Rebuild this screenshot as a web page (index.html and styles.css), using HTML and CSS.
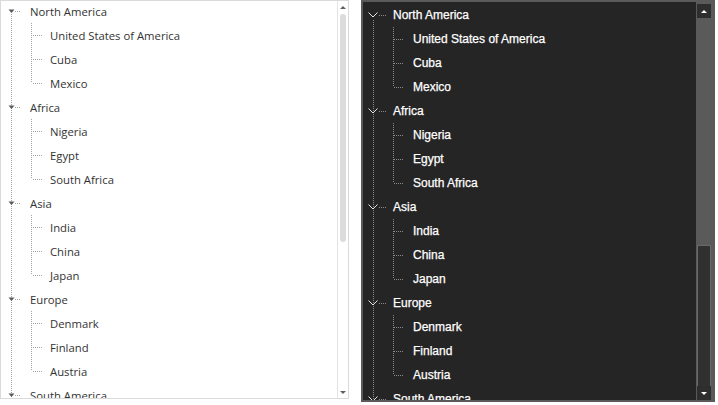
FILE: index.html
```html
<html>
  <head>
    <title>Tree views</title>
    <link rel="stylesheet" href="styles.css">
  </head>
  <body>
    <div class="panel light">
      <div class="tree">
        <div class="node first"><svg class="toggle" width="8" height="5" viewBox="0 0 8 5"><polygon points="0.5,0.5 6.5,0.5 3.5,4"/></svg><span class="label">North America</span></div>
        <div class="children">
          <div class="leaf"><span class="label">United States of America</span></div>
          <div class="leaf"><span class="label">Cuba</span></div>
          <div class="leaf"><span class="label">Mexico</span></div>
        </div>
        <div class="node"><svg class="toggle" width="8" height="5" viewBox="0 0 8 5"><polygon points="0.5,0.5 6.5,0.5 3.5,4"/></svg><span class="label">Africa</span></div>
        <div class="children">
          <div class="leaf"><span class="label">Nigeria</span></div>
          <div class="leaf"><span class="label">Egypt</span></div>
          <div class="leaf"><span class="label">South Africa</span></div>
        </div>
        <div class="node"><svg class="toggle" width="8" height="5" viewBox="0 0 8 5"><polygon points="0.5,0.5 6.5,0.5 3.5,4"/></svg><span class="label">Asia</span></div>
        <div class="children">
          <div class="leaf"><span class="label">India</span></div>
          <div class="leaf"><span class="label">China</span></div>
          <div class="leaf"><span class="label">Japan</span></div>
        </div>
        <div class="node"><svg class="toggle" width="8" height="5" viewBox="0 0 8 5"><polygon points="0.5,0.5 6.5,0.5 3.5,4"/></svg><span class="label">Europe</span></div>
        <div class="children">
          <div class="leaf"><span class="label">Denmark</span></div>
          <div class="leaf"><span class="label">Finland</span></div>
          <div class="leaf"><span class="label">Austria</span></div>
        </div>
        <div class="node"><svg class="toggle" width="8" height="5" viewBox="0 0 8 5"><polygon points="0.5,0.5 6.5,0.5 3.5,4"/></svg><span class="label">South America</span></div>
      </div>
      <div class="scrollbar">
        <svg class="arrow" width="6" height="3" viewBox="0 0 6 3"><polygon points="3,0 6,3 0,3"/></svg>
        <div class="thumb"></div>
        <div class="track"></div>
        <svg class="arrow" width="6" height="3" viewBox="0 0 6 3"><polygon points="0,0 6,0 3,3"/></svg>
      </div>
    </div>

    <div class="panel dark">
      <div class="tree">
        <div class="node first"><svg class="toggle" width="10" height="6" viewBox="0 0 10 6"><polyline points="0.5,0.5 5,5 9.5,0.5"/></svg><span class="label">North America</span></div>
        <div class="children">
          <div class="leaf"><span class="label">United States of America</span></div>
          <div class="leaf"><span class="label">Cuba</span></div>
          <div class="leaf"><span class="label">Mexico</span></div>
        </div>
        <div class="node"><svg class="toggle" width="10" height="6" viewBox="0 0 10 6"><polyline points="0.5,0.5 5,5 9.5,0.5"/></svg><span class="label">Africa</span></div>
        <div class="children">
          <div class="leaf"><span class="label">Nigeria</span></div>
          <div class="leaf"><span class="label">Egypt</span></div>
          <div class="leaf"><span class="label">South Africa</span></div>
        </div>
        <div class="node"><svg class="toggle" width="10" height="6" viewBox="0 0 10 6"><polyline points="0.5,0.5 5,5 9.5,0.5"/></svg><span class="label">Asia</span></div>
        <div class="children">
          <div class="leaf"><span class="label">India</span></div>
          <div class="leaf"><span class="label">China</span></div>
          <div class="leaf"><span class="label">Japan</span></div>
        </div>
        <div class="node"><svg class="toggle" width="10" height="6" viewBox="0 0 10 6"><polyline points="0.5,0.5 5,5 9.5,0.5"/></svg><span class="label">Europe</span></div>
        <div class="children">
          <div class="leaf"><span class="label">Denmark</span></div>
          <div class="leaf"><span class="label">Finland</span></div>
          <div class="leaf"><span class="label">Austria</span></div>
        </div>
        <div class="node"><svg class="toggle" width="10" height="6" viewBox="0 0 10 6"><polyline points="0.5,0.5 5,5 9.5,0.5"/></svg><span class="label">South America</span></div>
      </div>
      <div class="scrollbar">
        <div class="button"><svg width="6" height="3" viewBox="0 0 6 3"><polygon points="3,0 6,3 0,3"/></svg></div>
        <div class="thumb"></div>
        <div class="track"></div>
        <div class="button"><svg width="6" height="3" viewBox="0 0 6 3"><polygon points="0,0 6,0 3,3"/></svg></div>
      </div>
    </div>
  </body>
</html>
```

FILE: styles.css
```css
/* Page */
body {
  margin: 0;
  display: flex;
  gap: 12px;
  background-color: white;
}

.panel {
  display: flex;
  box-sizing: border-box;
  overflow: hidden;
}

.tree {
  flex: 1;
  overflow: hidden;
}

.node, .leaf {
  display: flex;
  align-items: center;
  height: 24px;
  white-space: nowrap;
}

.leaf {
  padding-left: 49px;
}

.children {
  background-repeat: no-repeat;
}

/* Light theme */
.light {
  width: 349px;
  height: 399px;
  border: 1px solid #dadada;
}

.light .tree {
  margin-top: -2px;
  font-family: "Open Sans", sans-serif;
  font-size: 11.3px;
  color: #333333;
  background-image: repeating-linear-gradient(to bottom, #a5a5a5 0 1px, transparent 1px 2px);
  background-size: 1px calc(100% - 15px);
  background-position: 10px 15px;
  background-repeat: no-repeat;
}

.light .node {
  background-image: repeating-linear-gradient(to right, #a5a5a5 0 1px, transparent 1px 2px);
  background-size: 6px 1px;
  background-position: 14px 12px;
  background-repeat: no-repeat;
}

.light .toggle {
  margin-left: 7px;
  margin-right: 14px;
  fill: #5a5a5a;
}

.light .children {
  background-image: repeating-linear-gradient(to bottom, #a5a5a5 0 1px, transparent 1px 2px);
  background-size: 1px calc(100% - 12px);
  background-position: 30px 0;
}

.light .leaf {
  background-image: repeating-linear-gradient(to right, #a5a5a5 0 1px, transparent 1px 2px);
  background-size: 10px 1px;
  background-position: 32px 12px;
  background-repeat: no-repeat;
}

.light .scrollbar {
  width: 11px;
  box-sizing: border-box;
  border-left: 1px solid #e3e3e3;
  padding: 5px 0 4px 2px;
  display: flex;
  flex-direction: column;
}

.light .arrow {
  fill: #606060;
  flex-shrink: 0;
}

.light .thumb {
  width: 6px;
  height: 228px;
  margin-top: 5px;
  border-radius: 3px;
  background-color: #dcdcdc;
}

.light .track {
  flex: 1;
}

/* Dark theme */
.dark {
  width: 354px;
  height: 402px;
  border: 2px solid #5a5a5a;
  background-color: #252525;
}

.dark .tree {
  padding-top: 1px;
  font-family: "Liberation Sans", Arial, sans-serif;
  font-size: 12px;
  color: white;
  -webkit-text-stroke: 0.25px white;
  background-image: repeating-linear-gradient(to bottom, #8a8a8a 0 1px, transparent 1px 2px);
  background-size: 1px calc(100% - 18px);
  background-position: 10px 18px;
  background-repeat: no-repeat;
}

.dark .leaf {
  padding-left: 50px;
  background-image: repeating-linear-gradient(to right, #8a8a8a 0 1px, transparent 1px 2px);
  background-size: 10px 1px;
  background-position: 31px 12px;
  background-repeat: no-repeat;
}

.dark .node {
  background-image: repeating-linear-gradient(to right, #8a8a8a 0 1px, transparent 1px 2px);
  background-size: 8px 1px;
  background-position: 16px 12px;
  background-repeat: no-repeat;
}

.dark .toggle {
  margin-left: 5px;
  margin-right: 15px;
  fill: none;
  stroke: #e6e6e6;
  stroke-width: 1;
}

.dark .children {
  background-image: repeating-linear-gradient(to bottom, #8a8a8a 0 1px, transparent 1px 2px);
  background-size: 1px calc(100% - 12px);
  background-position: 30px 0;
}

.dark .scrollbar {
  width: 17px;
  box-sizing: border-box;
  padding: 2px 2px 0 1px;
  background-color: #5a5a5a;
  display: flex;
  flex-direction: column;
}

.dark .button {
  height: 14px;
  flex-shrink: 0;
  background-color: #2e2e2e;
  display: flex;
  align-items: center;
  justify-content: center;
  fill: white;
}

.dark .thumb {
  height: 227px;
  flex-shrink: 0;
}

.dark .track {
  flex: 1;
  box-sizing: border-box;
  border: 1px solid #6a6a6a;
  border-bottom: none;
  background-color: #303030;
}
```
